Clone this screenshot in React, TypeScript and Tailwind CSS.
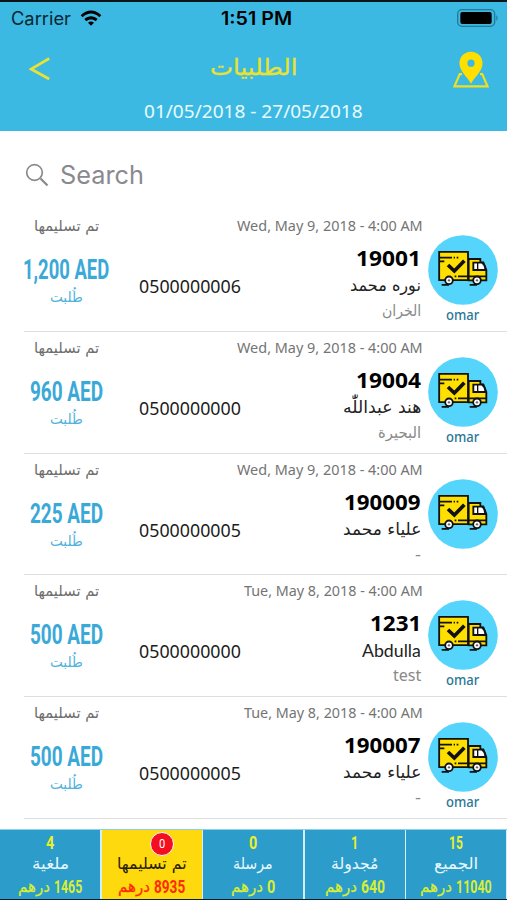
import { useLayoutEffect, useRef, type ReactNode } from "react";
import { clsx } from "clsx";

/* Single line of text condensed or expanded horizontally to a given width. */
function Fit({ w, className, rtl, children }: { w: number; className?: string; rtl?: boolean; children: ReactNode }) {
  const ref = useRef<HTMLSpanElement>(null);
  useLayoutEffect(() => {
    const apply = () => {
      const el = ref.current;
      if (el) el.style.transform = `scaleX(${w / el.offsetWidth})`;
    };
    apply();
    document.fonts?.ready.then(apply);
  }, [w]);
  return (
    <span className={clsx("flex shrink-0 justify-start", className)} style={{ width: w }}>
      <span ref={ref} dir={rtl ? "rtl" : "ltr"} className="inline-block shrink-0 origin-left whitespace-nowrap">
        {children}
      </span>
    </span>
  );
}

const orders = [
  { date: "Wed, May 9, 2018 - 4:00 AM", dw: 186, id: "19001", iw: 65, name: "نوره محمد", nw: 71, area: "الخران", aw: 39, phone: "0500000006", price: "1,200 AED", pw: 86, driver: "omar" },
  { date: "Wed, May 9, 2018 - 4:00 AM", dw: 186, id: "19004", iw: 65, name: "هند عبداللّٰه", nw: 78, area: "البحيرة", aw: 43, phone: "0500000000", price: "960 AED", pw: 73, driver: "omar" },
  { date: "Wed, May 9, 2018 - 4:00 AM", dw: 186, id: "190009", iw: 77, name: "علياء محمد", nw: 78, area: "-", aw: 6, phone: "0500000005", price: "225 AED", pw: 73, driver: "" },
  { date: "Tue, May 8, 2018 - 4:00 AM", dw: 179, id: "1231", iw: 51, name: "Abdulla", nw: 59, area: "test", aw: 28, phone: "0500000000", price: "500 AED", pw: 73, driver: "omar" },
  { date: "Tue, May 8, 2018 - 4:00 AM", dw: 179, id: "190007", iw: 77, name: "علياء محمد", nw: 78, area: "-", aw: 6, phone: "0500000005", price: "500 AED", pw: 73, driver: "omar" },
  { date: "Mon, May 7, 2018 - 4:00 AM", dw: 186, id: "", iw: 0, name: "", nw: 0, area: "", aw: 0, phone: "", price: "", pw: 0, driver: "" },
];

const tabs = [
  { count: "4", cw: 8, label: "ملغية", lw: 37, amount: "1465", aw: 28 },
  { count: "0", cw: 6, label: "تم تسليمها", lw: 70, amount: "8935", aw: 31, active: true },
  { count: "0", cw: 8, label: "مرسلة", lw: 40, amount: "0", aw: 8 },
  { count: "1", cw: 7, label: "مُجدولة", lw: 47, amount: "640", aw: 24 },
  { count: "15", cw: 14, label: "الجميع", lw: 44, amount: "11040", aw: 36 },
];

function Truck() {
  return (
    <svg viewBox="24 31 210 210" className="h-[70px] w-[70px] shrink-0">
      <circle cx="129" cy="136" r="104.5" fill="#55d5fb" />
      <g stroke="#111" strokeWidth="5.500" strokeLinejoin="miter" strokeLinecap="butt">
        <path d="M146 103h35v10h9l9 23v31h-53z" fill="#fedf00" />
        <path d="M57.500 81.500H144v85H57.500z" fill="#fedf00" />
        <path d="M160 114h26c6 4 10 12 10 22h-36z" fill="#fff" />
        <path d="M173 114v22" strokeWidth="4" />
        <path d="M60 99h36M101 99h4M110 99h5M60 110h13M146 155h52M104 155h5M114 155h32" fill="none" />
        <path d="M65 180.500h22M149 180.500h22" fill="none" />
        <circle cx="87" cy="167" r="11.500" fill="#fff" />
        <circle cx="171" cy="167" r="11.500" fill="#fff" />
      </g>
      <circle cx="87" cy="167" r="3.500" fill="#666" />
      <circle cx="171" cy="167" r="3.500" fill="#666" />
      <path d="m84 121 19 18 30-31" fill="none" stroke="#111" strokeWidth="11" />
    </svg>
  );
}

export default function App() {
  return (
    <div className="flex h-[900px] w-[507px] flex-col overflow-hidden bg-white font-['Noto_Sans','DejaVu_Sans',sans-serif]">
      <header className="h-[131px] shrink-0 border-t-2 border-[#08151b] bg-[#3cb9e2]">
        <div className="flex h-[32px] items-center pl-[11px] pr-[8px] font-[Inter,sans-serif] text-[18px] leading-[32px] text-[#0b2630]">
          <Fit w={60} className="mt-[1px]">Carrier</Fit>
          <svg viewBox="0 0 66 48" className="ml-[9px] mt-[-1px] h-[16px] w-[22px] text-black">
            <path d="M2 16C20-3 46-3 64 16l-6 6C43 7 23 7 8 22zM13 27c12-11 28-11 40 0l-6 7c-8-7-20-7-28 0zM24 38c6-5 12-5 18 0l-9 9z" fill="currentColor" />
          </svg>
          <Fit w={71} className="ml-[119px] mt-[1px] font-semibold text-black">1:51 PM</Fit>
          <svg viewBox="0 0 126 54" className="ml-auto mt-[-1px] h-[18px] w-[42px]">
            <rect x="2" y="2" width="111" height="50" rx="13" fill="none" stroke="#257994" strokeWidth="4" />
            <rect x="10" y="9" width="94" height="36" rx="6" fill="#000" />
            <path d="M118 18q8 9 0 18z" fill="#257994" />
          </svg>
        </div>
        <div className="flex h-[65px] items-center pl-[29px] pr-[18px]">
          <svg viewBox="0 0 22 24" className="mt-[4px] h-[24px] w-[22px]">
            <path d="M20.200 1.500 2 12l18.200 10" fill="none" stroke="#e9e233" strokeWidth="2.600" />
          </svg>
          <Fit w={87} rtl className="ml-[159px] font-['DejaVu_Sans',sans-serif] text-[23px] leading-[40px] text-[#e9e233] [-webkit-text-stroke:0.300px_#e9e233]">الطلبيات</Fit>
          <svg viewBox="0 0 108 112" className="ml-auto mt-[6px] h-[37px] w-[36px]">
            <path d="M27 70H20L4 107h100L88 70h-7" fill="none" stroke="#f0e01f" strokeWidth="6.500" />
            <path fillRule="evenodd" d="M54 2c20 0 35 15 35 35 0 24-23 40-35 62C42 77 19 61 19 37 19 17 34 2 54 2zm0 24a11 11 0 1 0 0 22 11 11 0 0 0 0-22z" fill="#fedf00" />
          </svg>
        </div>
        <div className="flex h-[26px] justify-center text-[18px] leading-[24px] text-[#e9fbff]">
          <Fit w={219}>01/05/2018 - 27/05/2018</Fit>
        </div>
      </header>

      <main className="h-[698px] shrink-0 overflow-hidden">
        <div className="flex h-[79px] items-center pl-[25px] pt-[9px] font-[Inter,sans-serif] text-[25px] leading-[36px] text-[#8a8a8e]">
          <svg viewBox="0 0 24 24" className="h-[24px] w-[24px]">
            <circle cx="9.500" cy="9.500" r="7.800" fill="none" stroke="currentColor" strokeWidth="1.700" />
            <path d="m15.500 15.500 7 7" stroke="currentColor" strokeWidth="2.300" />
          </svg>
          <Fit w={84} className="ml-[11px]">Search</Fit>
        </div>
        {orders.map((o, i) => (
          <article key={i} className="ml-[24px] flex h-[121.750px] border-b border-[#dedede]">
            <div className="flex w-[84px] shrink-0 flex-col items-center">
              <Fit w={65} rtl className="h-[43px] font-['DejaVu_Sans',sans-serif] text-[15px] leading-[33px] text-[#6e6e6e]">تم تسليمها</Fit>
              {o.price && (
                <>
                  <Fit w={o.pw} className="h-[33px] font-[Roboto,sans-serif] text-[27px] font-bold leading-[34px] text-[#3aa9d8]">{o.price}</Fit>
                  <Fit w={33} rtl className="h-[24px] font-['DejaVu_Sans',sans-serif] text-[14px] leading-[22px] text-[#4fb2dd]">طُلبت</Fit>
                </>
              )}
            </div>
            <div className="flex min-w-0 flex-1 flex-col">
              <Fit w={o.dw} className="h-[31px] self-end font-['Noto_Sans',sans-serif] text-[14.500px] leading-[31px] text-[#747474]">{o.date}</Fit>
              {o.id && (
                <div className="flex justify-between pl-[31px]">
                  <Fit w={102} className="mt-[32px] h-[26px] text-[18px] leading-[26px] text-[#1c1c1c]">{o.phone}</Fit>
                  <div className="flex flex-col items-end pr-[2px]">
                    <Fit w={o.iw} className="h-[32px] text-[22px] font-bold leading-[32px] text-black">{o.id}</Fit>
                    <Fit w={o.nw} rtl={o.name !== "Abdulla"} className={clsx("h-[25px] leading-[25px] text-[#222]", o.name === "Abdulla" ? "font-[Lato,sans-serif] text-[18px]" : "font-['DejaVu_Sans',sans-serif] text-[17px]")}>{o.name}</Fit>
                    <Fit w={o.aw} rtl={o.aw > 30} className="font-['Noto_Sans','DejaVu_Sans',sans-serif] text-[15.500px] leading-[24px] text-[#8a8a8a]">{o.area}</Fit>
                  </div>
                </div>
              )}
            </div>
            <div className="flex w-[84px] shrink-0 flex-col items-center pr-[5px] pt-[25px]">
              {o.id && <Truck />}
              {o.driver && <Fit w={33} className="text-[15px] font-medium leading-[18px] text-[#2b7796]">{o.driver}</Fit>}
            </div>
          </article>
        ))}
      </main>

      <footer className="grid h-[71px] shrink-0 grid-cols-5 gap-x-[1.500px] border-b border-t border-b-[#08202b] border-t-[#8ed0e6] bg-[#d5effa] pr-[1px]">
        {tabs.map((t) => (
          <div key={t.label} className={clsx("flex flex-col items-center", t.active ? "bg-[#fed90d]" : "bg-[#2c9cca]")}>
            <div className={clsx("flex h-[24px] shrink-0 items-center justify-center", t.active && "pl-[21px] pt-[4px]")}>
              <div className={clsx("flex items-center justify-center font-[Roboto,sans-serif]", t.active ? "h-[24px] w-[24px] shrink-0 rounded-full border border-white bg-[#f50d20] text-[13px] leading-[22px] text-white" : "mt-[2px] text-[18px] font-bold leading-[24px] text-[#e9f02f]")}>
                <Fit w={t.cw}>{t.count}</Fit>
              </div>
            </div>
            <Fit w={t.lw} rtl className={clsx("h-[20px] font-['DejaVu_Sans',sans-serif] text-[16px] leading-[20px]", t.active ? "text-[#292000]" : "text-[#e8f8ff]")}>{t.label}</Fit>
            <div dir="rtl" className={clsx("flex gap-[4px] text-[18px] font-bold leading-[25px]", t.active ? "text-[#ff2a00]" : "text-[#d8ee35]")}>
              <Fit w={t.aw} className="[direction:ltr] font-[Roboto,sans-serif]">{t.amount}</Fit>
              <Fit w={32} rtl className="[direction:ltr] font-['DejaVu_Sans',sans-serif] text-[16px] font-normal [-webkit-text-stroke:0.250px_currentColor]">درهم</Fit>
            </div>
          </div>
        ))}
      </footer>
    </div>
  );
}
